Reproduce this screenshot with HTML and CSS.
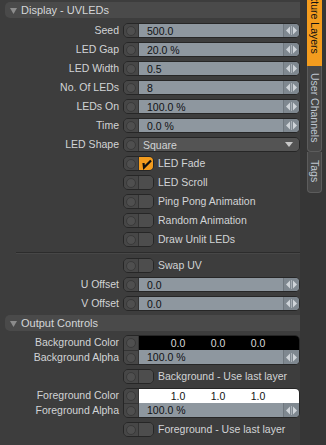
FILE: index.html
```html
<!DOCTYPE html>
<html lang="en">
<head>
    <meta charset="UTF-8">
    <title>Display - UVLEDs</title>
    <link rel="stylesheet" href="styles.css">
</head>
<body>
<div class="window">
    <div class="panel">
        <div class="section-head">
            <svg class="caret" width="7" height="6" viewBox="0 0 7 6"><path d="M0 0 H7 L3.5 6 Z" fill="#8c8c8c"/></svg>
            <span>Display - UVLEDs</span>
        </div>

        <div class="row first">
            <label>Seed</label>
            <div class="ctl"><span class="knob"><i></i></span><span class="field"><span class="val">500.0</span><span class="spin"><svg width="11" height="9" viewBox="0 0 11 9"><path d="M0 4.5 L4 0.5 V8.5 Z M11 4.5 L7 0.5 V8.5 Z" fill="#cfd4d9"/><path d="M5.5 0 V9" stroke="#a9b0b7" stroke-width="1"/></svg></span></span></div>
        </div>
        <div class="row">
            <label>LED Gap</label>
            <div class="ctl"><span class="knob"><i></i></span><span class="field"><span class="val">20.0 %</span><span class="spin"><svg width="11" height="9" viewBox="0 0 11 9"><path d="M0 4.5 L4 0.5 V8.5 Z M11 4.5 L7 0.5 V8.5 Z" fill="#cfd4d9"/><path d="M5.5 0 V9" stroke="#a9b0b7" stroke-width="1"/></svg></span></span></div>
        </div>
        <div class="row">
            <label>LED Width</label>
            <div class="ctl"><span class="knob"><i></i></span><span class="field"><span class="val">0.5</span><span class="spin"><svg width="11" height="9" viewBox="0 0 11 9"><path d="M0 4.5 L4 0.5 V8.5 Z M11 4.5 L7 0.5 V8.5 Z" fill="#cfd4d9"/><path d="M5.5 0 V9" stroke="#a9b0b7" stroke-width="1"/></svg></span></span></div>
        </div>
        <div class="row">
            <label>No. Of LEDs</label>
            <div class="ctl"><span class="knob"><i></i></span><span class="field"><span class="val">8</span><span class="spin"><svg width="11" height="9" viewBox="0 0 11 9"><path d="M0 4.5 L4 0.5 V8.5 Z M11 4.5 L7 0.5 V8.5 Z" fill="#cfd4d9"/><path d="M5.5 0 V9" stroke="#a9b0b7" stroke-width="1"/></svg></span></span></div>
        </div>
        <div class="row">
            <label>LEDs On</label>
            <div class="ctl"><span class="knob"><i></i></span><span class="field"><span class="val">100.0 %</span><span class="spin"><svg width="11" height="9" viewBox="0 0 11 9"><path d="M0 4.5 L4 0.5 V8.5 Z M11 4.5 L7 0.5 V8.5 Z" fill="#cfd4d9"/><path d="M5.5 0 V9" stroke="#a9b0b7" stroke-width="1"/></svg></span></span></div>
        </div>
        <div class="row">
            <label>Time</label>
            <div class="ctl"><span class="knob"><i></i></span><span class="field"><span class="val">0.0 %</span><span class="spin"><svg width="11" height="9" viewBox="0 0 11 9"><path d="M0 4.5 L4 0.5 V8.5 Z M11 4.5 L7 0.5 V8.5 Z" fill="#cfd4d9"/><path d="M5.5 0 V9" stroke="#a9b0b7" stroke-width="1"/></svg></span></span></div>
        </div>
        <div class="row">
            <label>LED Shape</label>
            <div class="ctl"><span class="knob"><i></i></span><span class="field select"><span class="val">Square</span><svg class="drop" width="8" height="5" viewBox="0 0 8 5"><path d="M0 0 H8 L4 5 Z" fill="#c8c8c8"/></svg></span></div>
        </div>

        <div class="row">
            <span></span>
            <div class="check-line"><span class="toggle"><span class="knob"><i></i></span><span class="box on"><svg width="15" height="13" viewBox="0 0 15 13"><path d="M4.5 6 L5 10.5 L12 3.5" fill="none" stroke="#111" stroke-width="2.2"/></svg></span></span><span class="text">LED Fade</span></div>
        </div>
        <div class="row">
            <span></span>
            <div class="check-line"><span class="toggle"><span class="knob"><i></i></span><span class="box"></span></span><span class="text">LED Scroll</span></div>
        </div>
        <div class="row">
            <span></span>
            <div class="check-line"><span class="toggle"><span class="knob"><i></i></span><span class="box"></span></span><span class="text">Ping Pong Animation</span></div>
        </div>
        <div class="row">
            <span></span>
            <div class="check-line"><span class="toggle"><span class="knob"><i></i></span><span class="box"></span></span><span class="text">Random Animation</span></div>
        </div>
        <div class="row">
            <span></span>
            <div class="check-line"><span class="toggle"><span class="knob"><i></i></span><span class="box"></span></span><span class="text">Draw Unlit LEDs</span></div>
        </div>

        <div class="divider"></div>

        <div class="row after-divider">
            <span></span>
            <div class="check-line"><span class="toggle"><span class="knob"><i></i></span><span class="box"></span></span><span class="text">Swap UV</span></div>
        </div>
        <div class="row">
            <label>U Offset</label>
            <div class="ctl"><span class="knob"><i></i></span><span class="field"><span class="val">0.0</span><span class="spin"><svg width="11" height="9" viewBox="0 0 11 9"><path d="M0 4.5 L4 0.5 V8.5 Z M11 4.5 L7 0.5 V8.5 Z" fill="#cfd4d9"/><path d="M5.5 0 V9" stroke="#a9b0b7" stroke-width="1"/></svg></span></span></div>
        </div>
        <div class="row">
            <label>V Offset</label>
            <div class="ctl"><span class="knob"><i></i></span><span class="field"><span class="val">0.0</span><span class="spin"><svg width="11" height="9" viewBox="0 0 11 9"><path d="M0 4.5 L4 0.5 V8.5 Z M11 4.5 L7 0.5 V8.5 Z" fill="#cfd4d9"/><path d="M5.5 0 V9" stroke="#a9b0b7" stroke-width="1"/></svg></span></span></div>
        </div>

        <div class="section-head output">
            <svg class="caret" width="7" height="6" viewBox="0 0 7 6"><path d="M0 0 H7 L3.5 6 Z" fill="#8c8c8c"/></svg>
            <span>Output Controls</span>
        </div>

        <div class="row color-row">
            <div class="labels"><label>Background Color</label><label>Background Alpha</label></div>
            <div class="ctl stack">
                <span class="knobs"><span class="knob"><i></i></span><span class="knob"><i></i></span></span>
                <span class="fields">
                    <span class="swatch black"><span>0.0</span><span>0.0</span><span>0.0</span></span>
                    <span class="field"><span class="val">100.0 %</span><span class="spin"><svg width="11" height="9" viewBox="0 0 11 9"><path d="M0 4.5 L4 0.5 V8.5 Z M11 4.5 L7 0.5 V8.5 Z" fill="#cfd4d9"/><path d="M5.5 0 V9" stroke="#a9b0b7" stroke-width="1"/></svg></span></span>
                </span>
            </div>
        </div>
        <div class="row">
            <span></span>
            <div class="check-line"><span class="toggle"><span class="knob"><i></i></span><span class="box"></span></span><span class="text">Background - Use last layer</span></div>
        </div>

        <div class="row color-row">
            <div class="labels"><label>Foreground Color</label><label>Foreground Alpha</label></div>
            <div class="ctl stack">
                <span class="knobs"><span class="knob"><i></i></span><span class="knob"><i></i></span></span>
                <span class="fields">
                    <span class="swatch white"><span>1.0</span><span>1.0</span><span>1.0</span></span>
                    <span class="field"><span class="val">100.0 %</span><span class="spin"><svg width="11" height="9" viewBox="0 0 11 9"><path d="M0 4.5 L4 0.5 V8.5 Z M11 4.5 L7 0.5 V8.5 Z" fill="#cfd4d9"/><path d="M5.5 0 V9" stroke="#a9b0b7" stroke-width="1"/></svg></span></span>
                </span>
            </div>
        </div>
        <div class="row">
            <span></span>
            <div class="check-line"><span class="toggle"><span class="knob"><i></i></span><span class="box"></span></span><span class="text">Foreground - Use last layer</span></div>
        </div>
    </div>

    <div class="tabs">
        <div class="tab active"><span>Texture Layers</span></div>
        <div class="tab channels"><span>User Channels</span></div>
        <div class="tab last"><span>Tags</span></div>
    </div>
</div>
</body>
</html>
```

FILE: styles.css
```css
html, body {
    margin: 0;
    padding: 0;
    background: #3d3d3d;
}

body {
    font-family: "Liberation Sans", Arial, sans-serif;
    font-size: 10.5px;
    color: #d2d4d6;
}

.window {
    display: flex;
    width: 326px;
    height: 445px;
    overflow: hidden;
}

.panel {
    width: 300px;
    padding-top: 2px;
}

.section-head {
    display: flex;
    align-items: center;
    gap: 4px;
    margin-left: 5px;
    height: 16px;
    padding-left: 5px;
    background: #4a4a4a;
    border-radius: 5px 0 0 5px;
    color: #d4d6d8;
    font-size: 11px;
}

.section-head.output {
    margin-top: 4px;
}

.caret {
    margin-top: 1px;
}

.row {
    display: grid;
    grid-template-columns: 119px 177px;
    column-gap: 4px;
    height: 15px;
    margin-top: 4px;
}

.row.first {
    margin-top: 5px;
}

.row label {
    text-align: right;
    line-height: 15px;
    white-space: nowrap;
}

.ctl {
    display: flex;
    height: 15px;
    box-sizing: border-box;
    border: 1px solid #262626;
    border-radius: 5px;
    overflow: hidden;
}

.knob {
    display: flex;
    align-items: center;
    justify-content: center;
    width: 15px;
    flex: none;
    background: #474747;
    border-right: 1px solid #333;
    box-sizing: border-box;
}

.knob i {
    display: block;
    width: 8px;
    height: 8px;
    border-radius: 50%;
    border: 1px solid #3a3a3a;
    background: #4f4f4f;
}

.field {
    display: flex;
    align-items: center;
    flex: 1;
    background: #8e979f;
    color: #101214;
}

.field .val {
    flex: 1;
    padding-left: 8px;
}

.spin {
    display: flex;
    align-items: center;
    justify-content: center;
    width: 15px;
    height: 100%;
    background: #7f8890;
    border-left: 1px solid #6f777e;
}

.field.select {
    background: #545454;
    color: #d2d4d6;
}

.field.select .val {
    padding-left: 4px;
}

.drop {
    margin-right: 6px;
}

.check-line {
    display: flex;
    align-items: center;
    gap: 4px;
}

.toggle {
    display: flex;
    width: 31px;
    height: 15px;
    box-sizing: border-box;
    border: 1px solid #262626;
    border-radius: 5px;
    overflow: hidden;
}

.box {
    flex: 1;
    background: #4d4d4d;
    display: flex;
    align-items: center;
    justify-content: center;
}

.box.on {
    background: #f39c1e;
}

.check-line .text {
    line-height: 15px;
    white-space: nowrap;
}

.divider {
    margin: 5px 0 0 16px;
    height: 1px;
    background: #2c2c2c;
    border-bottom: 1px solid #474747;
}

.row.after-divider {
    margin-top: 4px;
}

.row.color-row {
    height: 30px;
}

.labels {
    display: flex;
    flex-direction: column;
}

.labels label {
    height: 15px;
}

.ctl.stack {
    height: 30px;
}

.knobs {
    display: flex;
    flex-direction: column;
}

.knobs .knob {
    height: 14px;
}

.knobs .knob + .knob {
    border-top: 1px solid #333;
}

.fields {
    display: flex;
    flex-direction: column;
    flex: 1;
}

.swatch {
    display: grid;
    grid-template-columns: 40px 40px 40px;
    padding-left: 19px;
    height: 14px;
    line-height: 14px;
    text-align: center;
}

.swatch.black {
    background: #000;
    color: #d8d8d8;
}

.swatch.white {
    background: #fff;
    color: #111;
}

.fields .field {
    height: 14px;
}

.tabs {
    width: 26px;
    padding-left: 7px;
    box-sizing: border-box;
    background: #363636;
}

.tab {
    width: 15px;
    box-sizing: border-box;
    display: flex;
    justify-content: center;
    background: #474747;
    border: 1px solid #5c5c5c;
    border-top: none;
    border-radius: 0 0 4px 4px;
    color: #bfc6d0;
    font-size: 10.5px;
}

.tab span {
    writing-mode: vertical-rl;
    white-space: nowrap;
}

.tab.active {
    margin-top: -22px;
    height: 88px;
    background: #f39c1e;
    border-color: #f39c1e;
    color: #111;
    border-radius: 0;
}

.tab.active span {
    padding-top: 7px;
}

.tab.channels {
    height: 86px;
}

.tab.channels span {
    padding-top: 7px;
}

.tab.last {
    height: 41px;
}

.tab.last span {
    padding-top: 8px;
}
```
